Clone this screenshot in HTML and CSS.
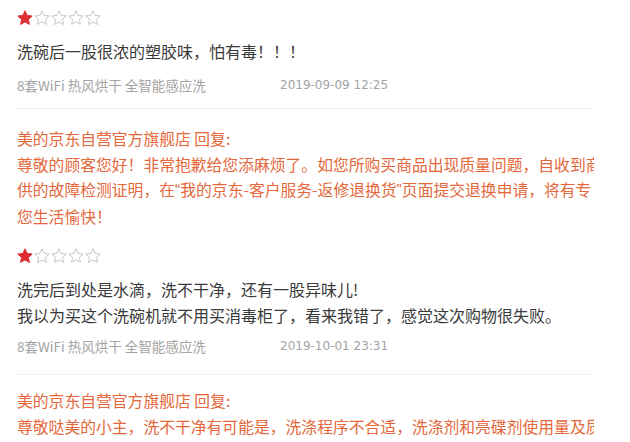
FILE: index.html
```html
<!DOCTYPE html>
<html lang="zh-CN">
<head>
  <meta charset="UTF-8">
  <meta name="viewport" content="width=device-width, initial-scale=1.0">
  <title>商品评价</title>
  <link rel="stylesheet" href="styles.css">
</head>
<body>

<div class="comments">

  <!-- review 1 -->
  <div class="review review-one">
    <div class="stars">
      <svg class="star on" viewBox="1.5 1.5 21 21"><path d="M12 2.6l2.8 6 6.6.8-4.9 4.5 1.3 6.5L12 17.1l-5.8 3.3 1.3-6.5-4.9-4.5 6.6-.8z"/></svg>
      <svg class="star" viewBox="1.5 1.5 21 21"><path d="M12 2.6l2.8 6 6.6.8-4.9 4.5 1.3 6.5L12 17.1l-5.8 3.3 1.3-6.5-4.9-4.5 6.6-.8z"/></svg>
      <svg class="star" viewBox="1.5 1.5 21 21"><path d="M12 2.6l2.8 6 6.6.8-4.9 4.5 1.3 6.5L12 17.1l-5.8 3.3 1.3-6.5-4.9-4.5 6.6-.8z"/></svg>
      <svg class="star" viewBox="1.5 1.5 21 21"><path d="M12 2.6l2.8 6 6.6.8-4.9 4.5 1.3 6.5L12 17.1l-5.8 3.3 1.3-6.5-4.9-4.5 6.6-.8z"/></svg>
      <svg class="star" viewBox="1.5 1.5 21 21"><path d="M12 2.6l2.8 6 6.6.8-4.9 4.5 1.3 6.5L12 17.1l-5.8 3.3 1.3-6.5-4.9-4.5 6.6-.8z"/></svg>
    </div>
    <p class="content">洗碗后一股很浓的塑胶味，怕有毒！！！</p>
    <div class="meta">
      <span class="spec">8套WiFi 热风烘干 全智能感应洗</span>
      <span class="date">2019-09-09 12:25</span>
    </div>
    <div class="reply">
      <p class="reply-title">美的京东自营官方旗舰店 回复:</p>
      <p>尊敬的顾客您好！非常抱歉给您添麻烦了。如您所购买商品出现质量问题，自收到商</p>
      <p>供的故障检测证明，在<span class="q">“</span>我的京东-客户服务-返修退换货<span class="q">”</span>页面提交退换申请，将有专</p>
      <p>您生活愉快！</p>
    </div>
  </div>

  <!-- review 2 -->
  <div class="review review-two">
    <div class="stars">
      <svg class="star on" viewBox="1.5 1.5 21 21"><path d="M12 2.6l2.8 6 6.6.8-4.9 4.5 1.3 6.5L12 17.1l-5.8 3.3 1.3-6.5-4.9-4.5 6.6-.8z"/></svg>
      <svg class="star" viewBox="1.5 1.5 21 21"><path d="M12 2.6l2.8 6 6.6.8-4.9 4.5 1.3 6.5L12 17.1l-5.8 3.3 1.3-6.5-4.9-4.5 6.6-.8z"/></svg>
      <svg class="star" viewBox="1.5 1.5 21 21"><path d="M12 2.6l2.8 6 6.6.8-4.9 4.5 1.3 6.5L12 17.1l-5.8 3.3 1.3-6.5-4.9-4.5 6.6-.8z"/></svg>
      <svg class="star" viewBox="1.5 1.5 21 21"><path d="M12 2.6l2.8 6 6.6.8-4.9 4.5 1.3 6.5L12 17.1l-5.8 3.3 1.3-6.5-4.9-4.5 6.6-.8z"/></svg>
      <svg class="star" viewBox="1.5 1.5 21 21"><path d="M12 2.6l2.8 6 6.6.8-4.9 4.5 1.3 6.5L12 17.1l-5.8 3.3 1.3-6.5-4.9-4.5 6.6-.8z"/></svg>
    </div>
    <p class="content">洗完后到处是水滴，洗不干净，还有一股异味儿!</p>
    <p class="content">我以为买这个洗碗机就不用买消毒柜了，看来我错了，感觉这次购物很失败。</p>
    <div class="meta">
      <span class="spec">8套WiFi 热风烘干 全智能感应洗</span>
      <span class="date">2019-10-01 23:31</span>
    </div>
    <div class="reply">
      <p class="reply-title">美的京东自营官方旗舰店 回复:</p>
      <p>尊敬哒美的小主，洗不干净有可能是，洗涤程序不合适，洗涤剂和亮碟剂使用量及质</p>
    </div>
  </div>

</div>

</body>
</html>
```

FILE: styles.css
```css
body {
  margin: 0;
  padding: 0;
  background-color: #ffffff;
  font-family: "Noto Sans CJK SC", "Noto Sans", sans-serif;
  overflow: hidden;
}

.comments {
  width: 577px;
  margin-left: 17px;
  overflow: hidden;
}

.review p {
  margin: 0;
  white-space: nowrap;
}

.stars {
  display: flex;
  gap: 1px;
  height: 16px;
}

.star {
  width: 16px;
  height: 16px;
  fill: none;
  stroke: #c4c4c4;
  stroke-width: 1.3;
  stroke-linejoin: round;
}

.star.on {
  fill: #dc2f32;
  stroke: #dc2f32;
}

.content {
  font-size: 16px;
  line-height: 26px;
  color: #3a3a3a;
}

.meta {
  display: flex;
  font-size: 13.5px;
  line-height: 20px;
  color: #a3a3a3;
  padding-bottom: 13px;
  border-bottom: 1px solid #efefef;
}

.meta .spec {
  width: 263px;
  flex-shrink: 0;
}

.meta .date {
  font-family: "DejaVu Sans", sans-serif;
  font-size: 12px;
}

.reply {
  color: #e4683c;
  font-size: 15.8px;
  line-height: 25.5px;
}

.reply .q {
  font-family: "Liberation Sans", sans-serif;
}

/* spacing as seen on the page */
.review-one .stars { margin-top: 10px; }
.review-one .content { margin-top: 12px; }
.review-one .meta { margin-top: 11px; }
.review-one .reply { margin-top: 17px; }

.review-two { margin-top: 19px; }
.review-two .content:first-of-type { margin-top: 12px; }
.review-two .meta { margin-top: 8px; padding-bottom: 18px; }
.review-two .reply { margin-top: 13px; }
```
